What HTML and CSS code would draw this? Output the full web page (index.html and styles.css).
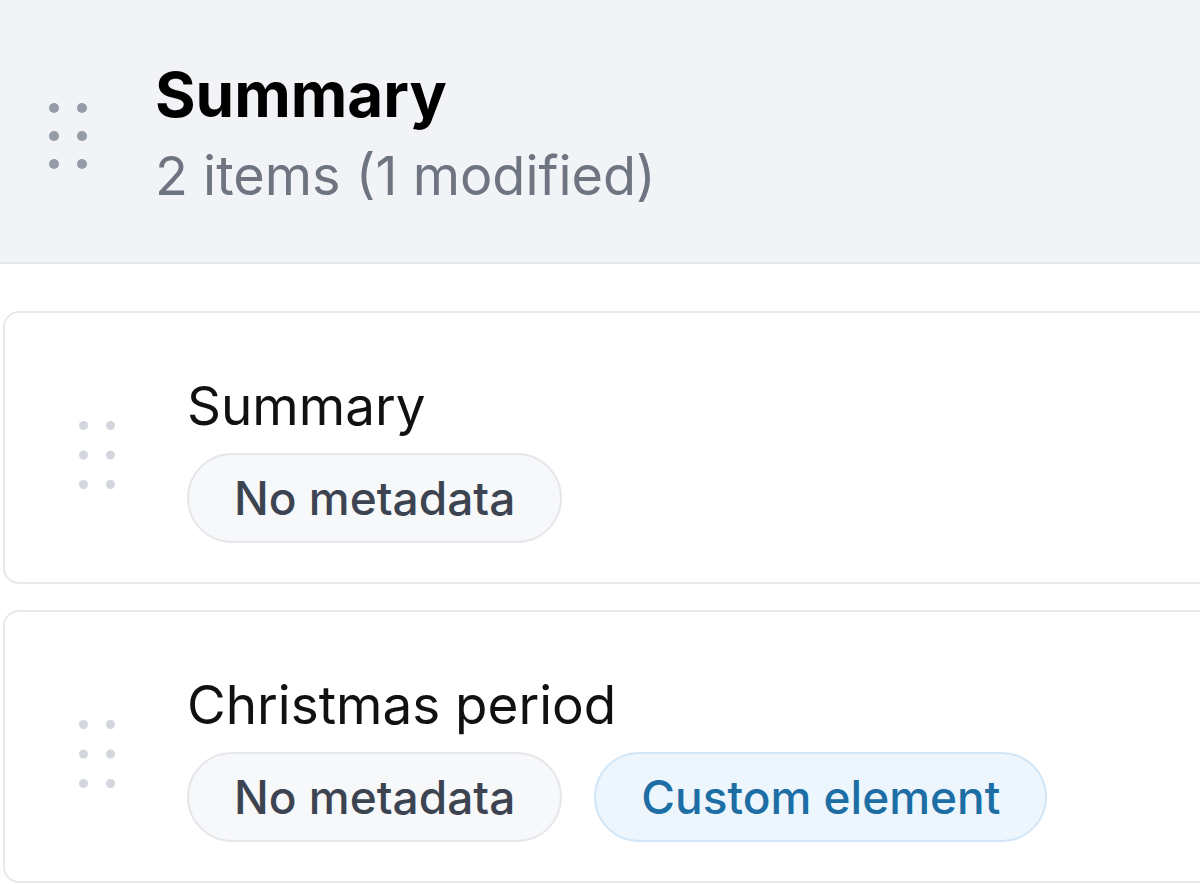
FILE: index.html
```html
<!DOCTYPE html>
<html lang="en">
<head>
  <meta charset="UTF-8">
  <meta name="viewport" content="width=device-width, initial-scale=1.0">
  <title>Summary</title>
  <link rel="stylesheet" href="styles.css">
</head>
<body>
  <!-- Group header -->
  <header class="group-header">
    <svg class="handle handle-dark" width="38" height="66" viewBox="0 0 38 66">
      <circle cx="5" cy="5" r="5"/><circle cx="33" cy="5" r="5"/>
      <circle cx="5" cy="33" r="5"/><circle cx="33" cy="33" r="5"/>
      <circle cx="5" cy="61" r="5"/><circle cx="33" cy="61" r="5"/>
    </svg>
    <div class="group-text">
      <h1>Summary</h1>
      <p class="group-meta">2 items (1 modified)</p>
    </div>
  </header>

  <!-- Items -->
  <div class="item-list">
    <div class="item">
      <svg class="handle handle-light" width="36" height="68" viewBox="0 0 36 68">
        <circle cx="4.5" cy="4.5" r="4.5"/><circle cx="31.5" cy="4.5" r="4.5"/>
        <circle cx="4.5" cy="34" r="4.5"/><circle cx="31.5" cy="34" r="4.5"/>
        <circle cx="4.5" cy="63.5" r="4.5"/><circle cx="31.5" cy="63.5" r="4.5"/>
      </svg>
      <div class="item-body">
        <h3>Summary</h3>
        <div class="tags">
          <span class="tag">No metadata</span>
        </div>
      </div>
    </div>

    <div class="item">
      <svg class="handle handle-light" width="36" height="68" viewBox="0 0 36 68">
        <circle cx="4.5" cy="4.5" r="4.5"/><circle cx="31.5" cy="4.5" r="4.5"/>
        <circle cx="4.5" cy="34" r="4.5"/><circle cx="31.5" cy="34" r="4.5"/>
        <circle cx="4.5" cy="63.5" r="4.5"/><circle cx="31.5" cy="63.5" r="4.5"/>
      </svg>
      <div class="item-body">
        <h3>Christmas period</h3>
        <div class="tags">
          <span class="tag">No metadata</span>
          <span class="tag tag-blue">Custom element</span>
        </div>
      </div>
    </div>
  </div>
</body>
</html>
```

FILE: styles.css
```css
* { box-sizing: border-box; }

body {
  margin: 0;
  font-family: Inter, "Noto Sans", sans-serif;
  background: #fff;
  overflow: hidden;
}

.group-header {
  display: flex;
  align-items: center;
  background: #f2f3f6;
  border-bottom: 2px solid #e4e6ea;
  padding: 60px 0 51px 49px;
}

.handle {
  flex-shrink: 0;
}

.handle-dark { fill: #959ba7; margin-right: 68px; }
.handle-light { fill: #d3d6dc; margin-right: 72px; margin-bottom: 8px; }

.group-text h1 {
  margin: 0;
  font-size: 62px;
  line-height: 70px;
  font-weight: 700;
  color: #000;
}

.group-meta {
  margin: 11px 0 0;
  font-size: 54px;
  line-height: 70px;
  color: #6f7580;
}

.item-list {
  display: flex;
  flex-direction: column;
  gap: 26px;
  padding: 47px 0 0 3px;
}

.item {
  display: flex;
  align-items: center;
  width: 1300px;
  border: 2px solid #e6e8ec;
  border-radius: 16px;
  padding: 62px 0 39px 74px;
}

.item-body h3 {
  margin: 0;
  font-size: 53px;
  line-height: 62px;
  font-weight: 400;
  color: #111;
}

.tags {
  display: flex;
  gap: 32px;
  margin-top: 16px;
}

.tag {
  height: 90px;
  line-height: 86px;
  padding: 0 45px;
  border: 2px solid #e5e7eb;
  border-radius: 45px;
  background: #f7f8fa;
  color: #3d4451;
  font-size: 46px;
  font-weight: 500;
}

.tag-blue {
  background: #eef6fd;
  border-color: #d2e6f7;
  color: #1c6ea5;
}
```
